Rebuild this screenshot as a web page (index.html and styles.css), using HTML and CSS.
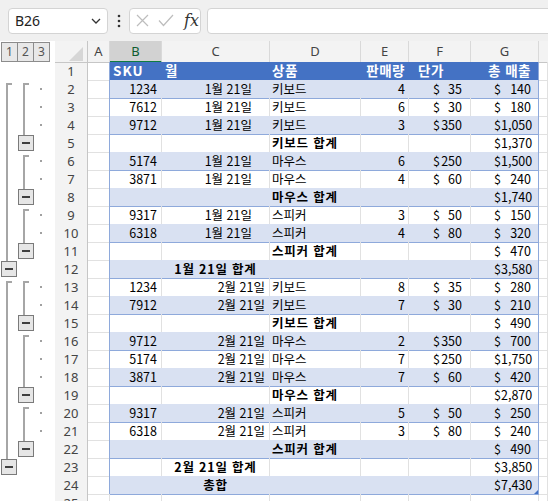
FILE: index.html
```html
<!DOCTYPE html>
<html lang="ko">
<head>
  <meta charset="UTF-8" />
  <meta name="viewport" content="width=device-width, initial-scale=1.0" />
  <title>Subtotals</title>
  <link rel="stylesheet" href="styles.css">
</head>
<body>
  <div class="topbar">
    <div class="namebox">
      <span>B26</span>
      <svg width="10" height="6" viewBox="0 0 10 6"><path d="M1 1l4 4 4-4" fill="none" stroke="#333" stroke-width="1.3"/></svg>
    </div>
    <svg class="kebab" width="4" height="14" viewBox="0 0 4 14">
      <circle cx="2" cy="2" r="1.3" fill="#333"/><circle cx="2" cy="7" r="1.3" fill="#333"/><circle cx="2" cy="12" r="1.3" fill="#333"/>
    </svg>
    <div class="fxbox">
      <svg width="13" height="13" viewBox="0 0 13 13"><path d="M1 1l11 11M12 1L1 12" stroke="#bdbdbd" stroke-width="1.2"/></svg>
      <svg width="16" height="13" viewBox="0 0 16 13"><path d="M1 6.5l4.5 5L15 1" fill="none" stroke="#bdbdbd" stroke-width="1.2"/></svg>
      <span class="fx">fx</span>
    </div>
    <div class="formula"></div>
  </div>

  <div class="sheet">
    <div class="outline">
      <div class="levels"><span>1</span><span>2</span><span>3</span></div>
      <svg class="bars" width="55" height="440" viewBox="0 0 55 440">
        <g fill="#a6a6a6">
          <!-- level 1 -->
          <rect x="6" y="21" width="2" height="178"/><rect x="6" y="21" width="6" height="2"/>
          <rect x="6" y="219" width="2" height="178"/><rect x="6" y="219" width="6" height="2"/>
          <!-- level 2 -->
          <rect x="23" y="21" width="2" height="52"/><rect x="23" y="21" width="6" height="2"/>
          <rect x="23" y="93" width="2" height="34"/><rect x="23" y="93" width="6" height="2"/>
          <rect x="23" y="147" width="2" height="34"/><rect x="23" y="147" width="6" height="2"/>
          <rect x="23" y="219" width="2" height="34"/><rect x="23" y="219" width="6" height="2"/>
          <rect x="23" y="273" width="2" height="52"/><rect x="23" y="273" width="6" height="2"/>
          <rect x="23" y="345" width="2" height="34"/><rect x="23" y="345" width="6" height="2"/>
        </g>
        <g fill="#a0a0a0">
          <rect x="40" y="26" width="2" height="2"/><rect x="40" y="44" width="2" height="2"/><rect x="40" y="62" width="2" height="2"/>
          <rect x="40" y="98" width="2" height="2"/><rect x="40" y="116" width="2" height="2"/>
          <rect x="40" y="152" width="2" height="2"/><rect x="40" y="170" width="2" height="2"/>
          <rect x="40" y="224" width="2" height="2"/><rect x="40" y="242" width="2" height="2"/>
          <rect x="40" y="278" width="2" height="2"/><rect x="40" y="296" width="2" height="2"/><rect x="40" y="314" width="2" height="2"/>
          <rect x="40" y="350" width="2" height="2"/><rect x="40" y="368" width="2" height="2"/>
        </g>
        <g class="btn" fill="#e6e6e6" stroke="#7a7a7a">
          <rect x="1.5" y="199.5" width="15" height="15"/>
          <rect x="1.5" y="397.5" width="15" height="15"/>
          <rect x="18.5" y="73.5" width="15" height="15"/>
          <rect x="18.5" y="127.5" width="15" height="15"/>
          <rect x="18.5" y="181.5" width="15" height="15"/>
          <rect x="18.5" y="253.5" width="15" height="15"/>
          <rect x="18.5" y="325.5" width="15" height="15"/>
          <rect x="18.5" y="379.5" width="15" height="15"/>
        </g>
        <g fill="#404040">
          <rect x="5" y="206" width="8" height="2"/>
          <rect x="5" y="404" width="8" height="2"/>
          <rect x="22" y="80" width="8" height="2"/>
          <rect x="22" y="134" width="8" height="2"/>
          <rect x="22" y="188" width="8" height="2"/>
          <rect x="22" y="260" width="8" height="2"/>
          <rect x="22" y="332" width="8" height="2"/>
          <rect x="22" y="386" width="8" height="2"/>
        </g>
      </svg>
    </div>

    <div class="grid">
      <div class="row colhead">
        <span class="corner"><svg width="14" height="14" viewBox="0 0 14 14"><path d="M14 0V14H0Z" fill="#d6d6d6"/></svg></span>
        <span>A</span><span class="sel">B</span><span>C</span><span>D</span><span>E</span><span>F</span><span>G</span><span class="blank"></span>
      </div>

      <div class="row tbl head">
        <span class="rh">1</span><span class="cell a"></span><span class="cell b">SKU</span><span class="cell c">월</span><span class="cell d">상품</span><span class="cell e">판매량</span><span class="cell f">단가</span><span class="cell g">총 매출</span><span class="cell h"></span>
      </div>
      <div class="row tbl band">
        <span class="rh">2</span><span class="cell a"></span><span class="cell b">1234</span><span class="cell c m1">1월 21일</span><span class="cell d">키보드</span><span class="cell e">4</span><span class="cell f"><i>$</i>35</span><span class="cell g"><i>$</i>140</span><span class="cell h"></span>
      </div>
      <div class="row tbl">
        <span class="rh">3</span><span class="cell a"></span><span class="cell b">7612</span><span class="cell c m1">1월 21일</span><span class="cell d">키보드</span><span class="cell e">6</span><span class="cell f"><i>$</i>30</span><span class="cell g"><i>$</i>180</span><span class="cell h"></span>
      </div>
      <div class="row tbl band">
        <span class="rh">4</span><span class="cell a"></span><span class="cell b">9712</span><span class="cell c m1">1월 21일</span><span class="cell d">키보드</span><span class="cell e">3</span><span class="cell f"><i>$</i>350</span><span class="cell g"><i>$</i>1,050</span><span class="cell h"></span>
      </div>
      <div class="row tbl">
        <span class="rh">5</span><span class="cell a"></span><span class="cell b"></span><span class="cell c"></span><span class="cell d sum">키보드 합계</span><span class="cell e"></span><span class="cell f"></span><span class="cell g"><i>$</i>1,370</span><span class="cell h"></span>
      </div>
      <div class="row tbl band">
        <span class="rh">6</span><span class="cell a"></span><span class="cell b">5174</span><span class="cell c m1">1월 21일</span><span class="cell d">마우스</span><span class="cell e">6</span><span class="cell f"><i>$</i>250</span><span class="cell g"><i>$</i>1,500</span><span class="cell h"></span>
      </div>
      <div class="row tbl">
        <span class="rh">7</span><span class="cell a"></span><span class="cell b">3871</span><span class="cell c m1">1월 21일</span><span class="cell d">마우스</span><span class="cell e">4</span><span class="cell f"><i>$</i>60</span><span class="cell g"><i>$</i>240</span><span class="cell h"></span>
      </div>
      <div class="row tbl band">
        <span class="rh">8</span><span class="cell a"></span><span class="cell b"></span><span class="cell c"></span><span class="cell d sum">마우스 합계</span><span class="cell e"></span><span class="cell f"></span><span class="cell g"><i>$</i>1,740</span><span class="cell h"></span>
      </div>
      <div class="row tbl">
        <span class="rh">9</span><span class="cell a"></span><span class="cell b">9317</span><span class="cell c m1">1월 21일</span><span class="cell d">스피커</span><span class="cell e">3</span><span class="cell f"><i>$</i>50</span><span class="cell g"><i>$</i>150</span><span class="cell h"></span>
      </div>
      <div class="row tbl band">
        <span class="rh">10</span><span class="cell a"></span><span class="cell b">6318</span><span class="cell c m1">1월 21일</span><span class="cell d">스피커</span><span class="cell e">4</span><span class="cell f"><i>$</i>80</span><span class="cell g"><i>$</i>320</span><span class="cell h"></span>
      </div>
      <div class="row tbl">
        <span class="rh">11</span><span class="cell a"></span><span class="cell b"></span><span class="cell c"></span><span class="cell d sum">스피커 합계</span><span class="cell e"></span><span class="cell f"></span><span class="cell g"><i>$</i>470</span><span class="cell h"></span>
      </div>
      <div class="row tbl band">
        <span class="rh">12</span><span class="cell a"></span><span class="cell b"></span><span class="cell c sum">1월 21일 합계</span><span class="cell d"></span><span class="cell e"></span><span class="cell f"></span><span class="cell g"><i>$</i>3,580</span><span class="cell h"></span>
      </div>
      <div class="row tbl">
        <span class="rh">13</span><span class="cell a"></span><span class="cell b">1234</span><span class="cell c">2월 21일</span><span class="cell d">키보드</span><span class="cell e">8</span><span class="cell f"><i>$</i>35</span><span class="cell g"><i>$</i>280</span><span class="cell h"></span>
      </div>
      <div class="row tbl band">
        <span class="rh">14</span><span class="cell a"></span><span class="cell b">7912</span><span class="cell c">2월 21일</span><span class="cell d">키보드</span><span class="cell e">7</span><span class="cell f"><i>$</i>30</span><span class="cell g"><i>$</i>210</span><span class="cell h"></span>
      </div>
      <div class="row tbl">
        <span class="rh">15</span><span class="cell a"></span><span class="cell b"></span><span class="cell c"></span><span class="cell d sum">키보드 합계</span><span class="cell e"></span><span class="cell f"></span><span class="cell g"><i>$</i>490</span><span class="cell h"></span>
      </div>
      <div class="row tbl band">
        <span class="rh">16</span><span class="cell a"></span><span class="cell b">9712</span><span class="cell c">2월 21일</span><span class="cell d">마우스</span><span class="cell e">2</span><span class="cell f"><i>$</i>350</span><span class="cell g"><i>$</i>700</span><span class="cell h"></span>
      </div>
      <div class="row tbl">
        <span class="rh">17</span><span class="cell a"></span><span class="cell b">5174</span><span class="cell c">2월 21일</span><span class="cell d">마우스</span><span class="cell e">7</span><span class="cell f"><i>$</i>250</span><span class="cell g"><i>$</i>1,750</span><span class="cell h"></span>
      </div>
      <div class="row tbl band">
        <span class="rh">18</span><span class="cell a"></span><span class="cell b">3871</span><span class="cell c">2월 21일</span><span class="cell d">마우스</span><span class="cell e">7</span><span class="cell f"><i>$</i>60</span><span class="cell g"><i>$</i>420</span><span class="cell h"></span>
      </div>
      <div class="row tbl">
        <span class="rh">19</span><span class="cell a"></span><span class="cell b"></span><span class="cell c"></span><span class="cell d sum">마우스 합계</span><span class="cell e"></span><span class="cell f"></span><span class="cell g"><i>$</i>2,870</span><span class="cell h"></span>
      </div>
      <div class="row tbl band">
        <span class="rh">20</span><span class="cell a"></span><span class="cell b">9317</span><span class="cell c">2월 21일</span><span class="cell d">스피커</span><span class="cell e">5</span><span class="cell f"><i>$</i>50</span><span class="cell g"><i>$</i>250</span><span class="cell h"></span>
      </div>
      <div class="row tbl">
        <span class="rh">21</span><span class="cell a"></span><span class="cell b">6318</span><span class="cell c">2월 21일</span><span class="cell d">스피커</span><span class="cell e">3</span><span class="cell f"><i>$</i>80</span><span class="cell g"><i>$</i>240</span><span class="cell h"></span>
      </div>
      <div class="row tbl band">
        <span class="rh">22</span><span class="cell a"></span><span class="cell b"></span><span class="cell c"></span><span class="cell d sum">스피커 합계</span><span class="cell e"></span><span class="cell f"></span><span class="cell g"><i>$</i>490</span><span class="cell h"></span>
      </div>
      <div class="row tbl">
        <span class="rh">23</span><span class="cell a"></span><span class="cell b"></span><span class="cell c sum">2월 21일 합계</span><span class="cell d"></span><span class="cell e"></span><span class="cell f"></span><span class="cell g"><i>$</i>3,850</span><span class="cell h"></span>
      </div>
      <div class="row tbl band last">
        <span class="rh">24</span><span class="cell a"></span><span class="cell b"></span><span class="cell c sum">총합</span><span class="cell d"></span><span class="cell e"></span><span class="cell f"></span><span class="cell g"><i>$</i>7,430</span><span class="cell h"></span>
      </div>
      <div class="row">
        <span class="rh">25</span><span class="cell a"></span><span class="cell b"></span><span class="cell c"></span><span class="cell d"></span><span class="cell e"></span><span class="cell f"></span><span class="cell g"></span><span class="cell h"></span>
      </div>
    </div>
  </div>
</body>
</html>
```

FILE: styles.css
```css
body {
  margin: 0;
  overflow: hidden;
  background: #ffffff;
  font-family: "Noto Sans CJK KR", "Noto Sans", sans-serif;
  color: #000;
}

/* formula bar */
.topbar {
  height: 41px;
  background: #f0f0f0;
  display: flex;
  align-items: center;
  padding-left: 8px;
  overflow: hidden;
}
.namebox {
  width: 100px;
  height: 26px;
  box-sizing: border-box;
  background: #fff;
  border: 1px solid #d4d4d4;
  border-radius: 4px;
  display: flex;
  align-items: center;
  justify-content: space-between;
  padding: 0 6px 0 6px;
  font-family: "Noto Sans", sans-serif;
  font-size: 14px;
  color: #222;
}
.kebab {
  margin: 0 8px 0 9px;
}
.fxbox {
  width: 72px;
  height: 26px;
  box-sizing: border-box;
  background: #fff;
  border: 1px solid #d4d4d4;
  border-radius: 4px;
  display: flex;
  align-items: center;
  gap: 9px;
  padding-left: 6px;
}
.fx {
  font-family: "DejaVu Serif", "Liberation Serif", serif;
  font-style: italic;
  font-size: 16px;
  color: #333;
  margin-left: 1px;
}
.formula {
  flex: 1;
  height: 26px;
  margin-left: 6px;
  margin-right: -10px;
  box-sizing: border-box;
  background: #fff;
  border: 1px solid #d4d4d4;
  border-radius: 4px;
}

/* sheet */
.sheet {
  display: flex;
}
.outline {
  width: 55px;
  flex: none;
}
.levels {
  height: 21px;
  display: flex;
  padding: 1px 0 0 1px;
  box-sizing: border-box;
}
.levels span {
  width: 17px;
  height: 20px;
  box-sizing: border-box;
  border: 1px solid #8c8c8c;
  margin-right: -1px;
  background: #e8e8e8;
  font-family: "Noto Sans", sans-serif;
  font-size: 12px;
  line-height: 18px;
  text-align: center;
  color: #555;
}
.bars {
  display: block;
}
.grid {
  flex: 1;
}
.row {
  display: grid;
  grid-template-columns: 33px 22px 52px 108px 91px 48px 62px 68px 1fr;
  height: 18px;
}

/* column header */
.colhead {
  height: 21px;
  background: #f3f3f3;
}
.colhead span {
  box-sizing: border-box;
  border-right: 1px solid #d9d9d9;
  border-bottom: 1px solid #c6c6c6;
  font-family: "Noto Sans", sans-serif;
  font-size: 13px;
  line-height: 20px;
  text-align: center;
  color: #444;
}
.colhead .corner {
  position: relative;
  border-right-color: #c6c6c6;
}
.corner svg {
  position: absolute;
  right: 4px;
  bottom: 1px;
}
.colhead .sel {
  background: #d2d2d2;
  border-bottom: 2px solid #107c41;
  color: #0e5c2f;
}
.colhead .blank {
  border-right: none;
}

/* row header */
.rh {
  box-sizing: border-box;
  background: #f3f3f3;
  border-right: 1px solid #c6c6c6;
  border-bottom: 1px solid #e3e3e3;
  font-family: "Noto Sans", sans-serif;
  font-size: 13px;
  line-height: 18px;
  text-align: center;
  color: #444;
}

/* cells */
.cell {
  box-sizing: border-box;
  border-right: 1px solid #e1e1e1;
  border-bottom: 1px solid #e1e1e1;
  font-size: 12.5px;
  line-height: 17px;
  padding: 0 3px;
  white-space: nowrap;
}
.b, .c, .e {
  text-align: right;
}
.b {
  padding-right: 4px;
}
.c {
  padding-right: 4px;
}
.c.m1 {
  padding-right: 17px;
}
.d {
  padding-left: 2px;
}
.e {
  padding-right: 3px;
}
.f, .g {
  display: flex;
  justify-content: space-between;
}
.f {
  padding: 0 8px 0 24px;
}
.g {
  padding: 0 7px 0 23px;
}
.f i, .g i {
  font-style: normal;
}
.sum {
  font-weight: bold;
  letter-spacing: 0.8px;
}
.c.sum {
  text-align: center;
  padding: 0;
}

/* table */
.tbl .a {
  border-right-color: #8ea9db;
}
.tbl .b, .tbl .c, .tbl .d, .tbl .e, .tbl .f, .tbl .g {
  border-bottom-color: #8ea9db;
}
.tbl .g {
  border-right-color: #8ea9db;
}
.band .b, .band .c, .band .d, .band .e, .band .f {
  background: #d9e1f2;
  border-right-color: #d9e1f2;
}
.band .g {
  background: #d9e1f2;
}
.last .g {
  position: relative;
}
.last .g::after {
  content: "";
  position: absolute;
  right: 0;
  bottom: 0;
  border-left: 4px solid transparent;
  border-bottom: 4px solid #4472c4;
}
.head .b, .head .c, .head .d, .head .e, .head .f, .head .g {
  background: #4472c4;
  border-right-color: #4472c4;
  color: #fff;
  font-weight: bold;
  font-size: 13.5px;
  letter-spacing: 0.5px;
}
.head .g {
  border-right-color: #8ea9db;
  justify-content: flex-end;
}
.head .c {
  text-align: left;
}
.head .f {
  padding-left: 9px;
}
.head .b {
  text-align: left;
  padding-left: 3px;
  letter-spacing: 1px;
}
```
